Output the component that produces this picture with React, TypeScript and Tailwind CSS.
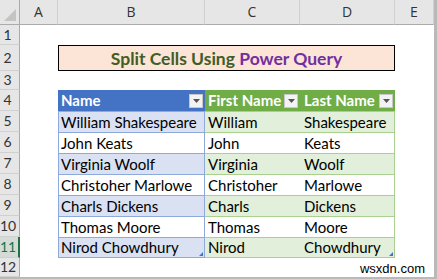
import React from "react"

const people = [
    ["William Shakespeare", "William", "Shakespeare"],
    ["John Keats", "John", "Keats"],
    ["Virginia Woolf", "Virginia", "Woolf"],
    ["Christoher Marlowe", "Christoher", "Marlowe"],
    ["Charls Dickens", "Charls", "Dickens"],
    ["Thomas Moore", "Thomas", "Moore"],
    ["Nirod Chowdhury", "Nirod", "Chowdhury"],
]

const cols = ["A", "B", "C", "D", "E"]

// filter dropdown button in table header
function FilterButton() {
    return (
        <span className="flex h-[14px] w-[14px] shrink-0 items-center justify-center border border-[#c8c8c8] bg-[#f3f3f3]">
            <svg width="7" height="4" viewBox="0 0 7 4">
                <path d="M0 0h7L3.5 4z" fill="#555" />
            </svg>
        </span>
    )
}

function ResizeHandle() {
    return (
        <svg className="absolute bottom-[1px] right-[1px]" width="4" height="4" viewBox="0 0 4 4">
            <path d="M4 0v4H0z" fill="#4472c4" />
        </svg>
    )
}

function RowHead({ n, selected }: { n: number; selected?: boolean }) {
    return (
        <div
            className={
                selected
                    ? "flex items-center border-b border-r-2 border-b-[#d0d0d0] border-r-[#217346] bg-[#d4dcd6] text-[#217346]"
                    : "flex items-center border-b border-r border-b-[#d0d0d0] border-r-[#ababab] bg-[#e6e6e6] text-[#333]"
            }
        >
            <span className="w-[15px] text-center text-[14px]">{n}</span>
        </div>
    )
}

export default function App() {
    return (
        <div className="h-[279px] w-[437px] bg-[#b9b9b9] pb-[2px] pr-[3px]" style={{ fontFamily: "Lato, 'Liberation Sans', sans-serif" }}>
            <div className="grid h-[277px] grid-cols-[20px_38px_147px_95px_95px_39px] grid-rows-[25px_20px_26px_19px_repeat(8,21px)_19px] bg-white text-[15px] leading-none">

                {/* Column headers */}
                <div className="relative border-b border-r border-[#ababab] bg-[#e6e6e6]">
                    <svg className="absolute bottom-[3px] right-[3px]" width="12" height="12" viewBox="0 0 12 12">
                        <path d="M12 0v12H0z" fill="#c4c4c4" />
                    </svg>
                </div>
                {cols.map((c) => (
                    <div
                        key={c}
                        className="flex items-center justify-center border-b border-r border-b-[#ababab] border-r-[#d0d0d0] bg-[#e6e6e6] text-[14px] text-[#333]"
                        style={{ fontFamily: "'Open Sans', sans-serif" }}
                    >
                        {c}
                    </div>
                ))}

                {/* Row 1 */}
                <RowHead n={1} />
                <div className="col-span-5" />

                {/* Row 2: title */}
                <RowHead n={2} />
                <div />
                <div className="col-span-3 flex items-center justify-center border border-black bg-[#fce4d6] pt-[1px] text-[17.5px] font-bold text-[#3f5e26]">
                    Split Cells Using&nbsp;<span className="text-[#7030a0]">Power Query</span>
                </div>
                <div />

                {/* Row 3 */}
                <RowHead n={3} />
                <div className="col-span-5" />

                {/* Row 4: table headers */}
                <RowHead n={4} />
                <div />
                <div className="flex items-center justify-between bg-[#4472c4] pl-[3px] pr-[2px] font-bold text-white">
                    <span>Name</span>
                    <FilterButton />
                </div>
                <div className="flex items-center justify-between bg-[#70ad47] pl-[3px] pr-[2px] font-bold text-white">
                    <span>First Name</span>
                    <FilterButton />
                </div>
                <div className="flex items-center justify-between bg-[#70ad47] pl-[4px] pr-[2px] font-bold text-white">
                    <span>Last Name</span>
                    <FilterButton />
                </div>
                <div />

                {/* Rows 5-11 */}
                {people.map((p, i) => {
                    const odd = i % 2 === 0
                    const last = i === people.length - 1
                    return (
                        <React.Fragment key={p[0]}>
                            <RowHead n={i + 5} selected={last} />
                            <div />
                            <div
                                className={`relative flex items-center border-x border-t border-[#8ea9db] pl-[2px] text-black ${odd ? "bg-[#d9e1f2]" : "bg-white"} ${last ? "border-b" : ""}`}
                            >
                                {p[0]}
                                {last && <ResizeHandle />}
                            </div>
                            <div
                                className={`flex items-center border-t border-[#a9d08e] pl-[3px] text-black ${odd ? "bg-[#e2efda]" : "bg-white"} ${last ? "border-b" : ""}`}
                            >
                                {p[1]}
                            </div>
                            <div
                                className={`relative flex items-center border-r border-t border-[#a9d08e] pl-[4px] text-black ${odd ? "bg-[#e2efda]" : "bg-white"} ${last ? "border-b" : ""}`}
                            >
                                {p[2]}
                                {last && <ResizeHandle />}
                            </div>
                            <div />
                        </React.Fragment>
                    )
                })}

                {/* Row 12 */}
                <RowHead n={12} />
                <div className="col-span-2" />
                <div className="col-span-3 flex items-end justify-end pb-[2px] pr-[9px] text-[13px] text-black" style={{ fontFamily: "'Liberation Sans', sans-serif" }}>
                    wsxdn.com
                </div>
            </div>
        </div>
    )
}
